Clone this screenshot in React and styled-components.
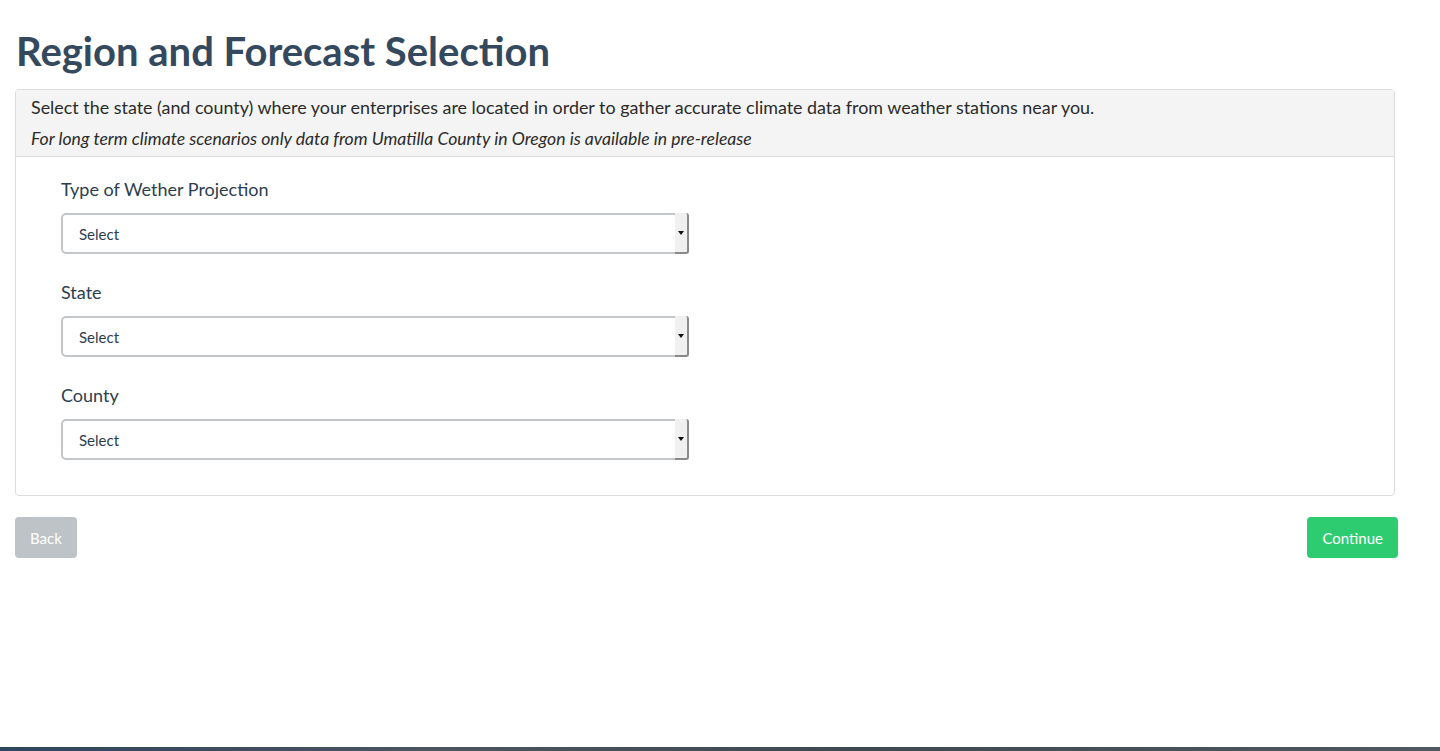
import React from 'react';
import styled, { createGlobalStyle } from 'styled-components';

const GlobalStyle = createGlobalStyle`
  html, body {
    margin: 0;
    padding: 0;
    background: #fff;
    font-family: Lato, "Open Sans", sans-serif;
  }
  * {
    box-sizing: border-box;
  }
`;

const Page = styled.div`
  height: 751px;
  display: flex;
  flex-direction: column;
  overflow: hidden;
`;

const Content = styled.div`
  flex: 1;
  padding: 28px 42px 0 15px;
`;

const Heading = styled.h1`
  margin: 0 0 15px 1px;
  font-size: 40px;
  line-height: 46px;
  font-weight: 700;
  color: #34495e;
`;

const Card = styled.div`
  width: 1380px;
  border: 1px solid #dcdcdc;
  border-radius: 4px;
  background: #fff;
`;

const CardHeader = styled.div`
  background: #f4f4f4;
  border-bottom: 1px solid #dcdcdc;
  padding: 2px 15px 2px;
  color: #2b2b2b;
  font-size: 17.9px;
  line-height: 31px;
`;

const Note = styled.div`
  font-style: italic;
  font-size: 17.6px;
`;

const CardBody = styled.div`
  padding: 21px 45px 35px;
  display: flex;
  flex-direction: column;
  gap: 27px;
`;

const Field = styled.div`
  display: flex;
  flex-direction: column;
  gap: 13px;
`;

const Label = styled.div`
  color: #2c3e50;
  font-size: 18px;
  line-height: 22px;
`;

const SelectBox = styled.div`
  width: 628px;
  height: 41px;
  border: 2px solid #c3c6c9;
  border-radius: 5px;
  display: flex;
  align-items: stretch;
  background: #fff;
`;

const SelectText = styled.div`
  flex: 1;
  display: flex;
  align-items: center;
  padding-left: 16px;
  font-size: 15px;
  color: #2c3e50;
`;

const ArrowPart = styled.div`
  width: 14px;
  background: #f0f0f0;
  border-right: 2px solid #8a8a8a;
  border-bottom: 2px solid #8a8a8a;
  border-top-right-radius: 3px;
  border-bottom-right-radius: 3px;
  display: flex;
  align-items: center;
  justify-content: center;
  margin: -2px -2px -2px 0;
`;

const Triangle = styled.div`
  width: 0;
  height: 0;
  border-left: 3px solid transparent;
  border-right: 3px solid transparent;
  border-top: 4px solid #111;
`;

const Actions = styled.div`
  display: flex;
  justify-content: space-between;
  width: 1383px;
  margin-top: 21px;
`;

const Button = styled.button`
  height: 41px;
  padding: 0 15px;
  border: none;
  border-radius: 4px;
  font-family: inherit;
  font-size: 15px;
  color: #fff;
  background: ${(p) => (p.$variant === 'success' ? '#2ecc71' : '#bdc3c7')};
  cursor: pointer;
`;

const Frame = styled.div`
  height: 4px;
  background: linear-gradient(90deg, #2e4560, #4a5560 30%, #3e4a52 60%, #505860);
`;

const fields = ['Type of Wether Projection', 'State', 'County'];

export default function App() {
  return (
    <>
      <GlobalStyle />
      <Page>
        <Content>
          <Heading>Region and Forecast Selection</Heading>
          <Card>
            <CardHeader>
              <div>
                Select the state (and county) where your enterprises are located in order to gather
                accurate climate data from weather stations near you.
              </div>
              <Note>
                For long term climate scenarios only data from Umatilla County in Oregon is
                available in pre-release
              </Note>
            </CardHeader>
            <CardBody>
              {fields.map((f) => (
                <Field key={f}>
                  <Label>{f}</Label>
                  <SelectBox>
                    <SelectText>Select</SelectText>
                    <ArrowPart>
                      <Triangle />
                    </ArrowPart>
                  </SelectBox>
                </Field>
              ))}
            </CardBody>
          </Card>
          <Actions>
            <Button disabled>Back</Button>
            <Button $variant="success">Continue</Button>
          </Actions>
        </Content>
        <Frame />
      </Page>
    </>
  );
}
